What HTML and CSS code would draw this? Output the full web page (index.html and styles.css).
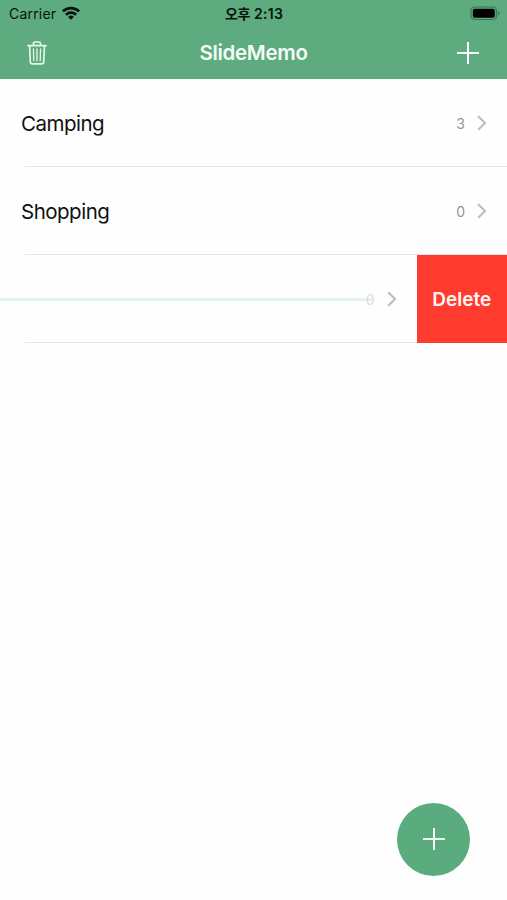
FILE: index.html
```html
<!DOCTYPE html>
<html lang="ko">
<head>
<meta charset="utf-8">
<meta name="viewport" content="width=device-width, initial-scale=1">
<title>SlideMemo</title>
<link rel="stylesheet" href="styles.css">
</head>
<body>
<header class="header">
  <div class="status">
    <div class="carrier"><span>Carrier</span>
      <svg class="wifi" width="18" height="14" viewBox="0 0 18 14"><g fill="none" stroke="#07130d" stroke-width="2.6"><path d="M.9 5.4a11.6 11.6 0 0 1 16.2 0"/><path d="M3.9 8.7a7.3 7.3 0 0 1 10.2 0"/></g><path d="M9 13.8 6.1 10.9a4.1 4.1 0 0 1 5.8 0z" fill="#07130d"/></svg>
    </div>
    <div class="time"><span class="meridiem">오후</span> <span>2:13</span></div>
    <svg class="battery" width="31" height="15" viewBox="0 0 31 15"><rect x="1" y="1" width="25.5" height="12.5" rx="3.8" fill="none" stroke="#397453" stroke-width="1.2"/><rect x="2.8" y="2.8" width="22" height="9" rx="2" fill="#000"/><path d="M28.2 5.2q3.2 2 0 4.2z" fill="#397453"/></svg>
  </div>
  <nav class="nav">
    <svg class="trash" width="20" height="24" viewBox="0 0 20 24" fill="none" stroke="#e6f7e9" stroke-width="1.7" stroke-linecap="round" stroke-linejoin="round"><path d="M1 4.7h18M6.5 4.5V2.6Q6.5 1 8.1 1h3.8q1.6 0 1.6 1.6v1.9M2.6 5l.7 16q.1 1.9 2 1.9h9.4q1.9 0 2-1.9l.7-16"/><path stroke-width="1.3" d="m6.4 8 .4 11.7M10 8v11.7M13.6 8l-.4 11.7"/></svg>
    <h1 class="title">SlideMemo</h1>
    <svg class="plus" width="22" height="22" viewBox="0 0 22 22"><path d="M11 0v22M0 11h22" stroke="#fff" stroke-width="2"/></svg>
  </nav>
</header>
<main class="list">
  <div class="row">
    <span class="name camping">Camping</span><span class="count">3</span>
    <svg class="chevron" width="10" height="16" viewBox="0 0 10 16"><path d="m1.2 1.2 6.8 6.8-6.8 6.8"/></svg>
  </div>
  <div class="row">
    <span class="name">Shopping</span><span class="count">0</span>
    <svg class="chevron" width="10" height="16" viewBox="0 0 10 16"><path d="m1.2 1.2 6.8 6.8-6.8 6.8"/></svg>
  </div>
  <div class="swiped">
    <div class="row sliding">
      <span class="strike"></span><span class="count faded">0</span>
      <svg class="chevron" width="10" height="16" viewBox="0 0 10 16"><path d="m1.2 1.2 6.8 6.8-6.8 6.8"/></svg>
    </div>
    <button class="delete">Delete</button>
  </div>
</main>
<button class="fab" aria-label="Add"><svg width="22" height="22" viewBox="0 0 22 22"><path d="M11 0v22M0 11h22" stroke="#effbf3" stroke-width="2"/></svg></button>
</body>
</html>
```

FILE: styles.css
```css
* { box-sizing: border-box; }
body {
  margin: 0;
  min-height: 900px;
  background: #fefefe;
  color: #111;
  font-family: Inter, "Noto Sans CJK KR", sans-serif;
}
svg { display: block; flex: none; }
button { border: 0; padding: 0; font: inherit; }

.header { height: 79px; background: #5dab7f; }
.status {
  display: grid;
  grid-template-columns: 1fr auto 1fr;
  align-items: center;
  height: 27px;
  padding: 0 6px 0 9px;
  color: #07130d;
  font-size: 14px;
}
.carrier { display: flex; align-items: center; gap: 6px; letter-spacing: 0.2px; }
.wifi { margin-top: -2px; }
.time { margin: -2px 2px 0 0; font-weight: 600; letter-spacing: 0.25px; white-space: nowrap; }
.meridiem { letter-spacing: -0.2px; }
.battery { justify-self: end; }
.nav {
  display: grid;
  grid-template-columns: 1fr auto 1fr;
  align-items: center;
  height: 51px;
  padding: 0 28px 0 27px;
}
.title { margin: 0 0 0 1px; color: #f5fdf5; font-size: 20.5px; font-weight: 600; line-height: 24px; letter-spacing: -0.3px; }
.plus { justify-self: end; }

.row {
  position: relative;
  display: flex;
  align-items: center;
  height: 88px;
  padding: 0 20px 0 21px;
}
.row::after {
  content: "";
  position: absolute;
  left: 25px;
  right: 0;
  bottom: 0;
  height: 1px;
  background: #e5e5e5;
}
.name { flex: 1; padding-top: 2px; font-size: 20.5px; line-height: 24px; letter-spacing: -0.5px; }
.count { margin-right: 12px; color: #969696; font-size: 14px; }
.chevron { fill: none; stroke: #bebebe; stroke-width: 2.2; }
.swiped { display: flex; }
.sliding { width: 416.5px; padding: 0 20px 0 0; }
.strike { flex: 1; height: 3px; margin-right: -8px; background: #e4f3ef; }
.faded { color: #dcdedd; }
.delete { flex: 1; height: 88px; background: #ff3b30; color: #fff4f2; font-size: 19px; font-weight: 600; }

.fab {
  position: fixed;
  right: 37px;
  bottom: 24.5px;
  display: grid;
  place-items: center;
  width: 73px;
  height: 73px;
  border-radius: 50%;
  background: #5aab7d;
}
```
